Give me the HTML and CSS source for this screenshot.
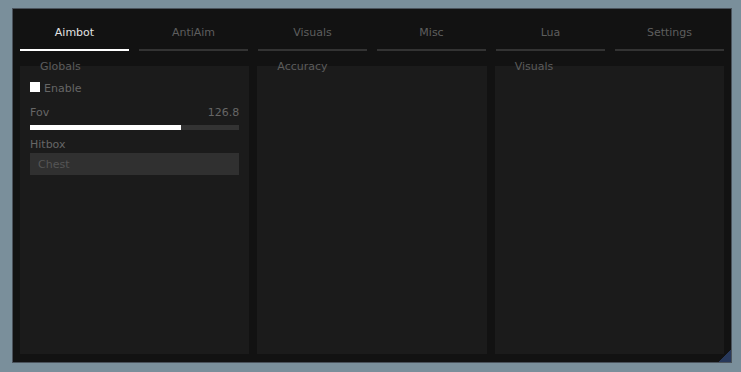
FILE: index.html
```html
<!DOCTYPE html>
<html lang="en">
<head>
    <meta charset="UTF-8">
    <meta name="viewport" content="width=device-width, initial-scale=1.0">
    <title>Menu</title>
    <link rel="stylesheet" href="styles.css">
</head>
<body>
    <div class="window">
        <!-- Tabs -->
        <div class="tabs">
            <div class="tab active">Aimbot</div>
            <div class="tab">AntiAim</div>
            <div class="tab">Visuals</div>
            <div class="tab">Misc</div>
            <div class="tab">Lua</div>
            <div class="tab">Settings</div>
        </div>

        <!-- Groups -->
        <div class="groups">
            <div class="group">
                <div class="group-title">Globals</div>
                <div class="checkbox-row">
                    <span class="checkbox checked"></span>
                    <span class="label">Enable</span>
                </div>
                <div class="slider-head">
                    <span class="label">Fov</span>
                    <span class="label">126.8</span>
                </div>
                <div class="slider">
                    <div class="slider-fill" style="width: 72.2%;"></div>
                </div>
                <div class="label combo-label">Hitbox</div>
                <div class="combo">Chest</div>
            </div>
            <div class="group">
                <div class="group-title">Accuracy</div>
            </div>
            <div class="group">
                <div class="group-title">Visuals</div>
            </div>
        </div>

        <div class="resize-grip"></div>
    </div>
</body>
</html>
```

FILE: styles.css
```css
body {
    margin: 0;
    padding: 8px 9px 9px 12px;
    background-color: #7a8f9b;
    font-family: "DejaVu Sans", Verdana, sans-serif;
    font-size: 11px;
    line-height: 14px;
}
.window {
    position: relative;
    box-sizing: border-box;
    width: 720px;
    height: 355px;
    background-color: #121212;
    border: 1px solid #4a525b;
    padding: 0 7px 8px 7px;
    display: flex;
    flex-direction: column;
}
.tabs {
    display: flex;
    gap: 10px;
    padding-top: 17px;
}
.tab {
    flex: 1;
    text-align: center;
    color: #5e5e5e;
    padding-bottom: 9px;
    border-bottom: 2px solid #333333;
}
.tab.active {
    color: #e2e2e2;
    border-bottom-color: #ffffff;
}
.groups {
    flex: 1;
    display: grid;
    grid-template-columns: 1fr 1fr 1fr;
    gap: 8px;
    margin-top: 15px;
}
.group {
    background-color: #1b1b1b;
    padding: 0 10px;
    display: flex;
    flex-direction: column;
}
.group-title {
    margin-top: -6px;
    padding-left: 10px;
    color: #5c5c5c;
}
.label {
    color: #666666;
}
.checkbox-row {
    display: flex;
    align-items: center;
    margin-top: 8px;
}
.checkbox {
    width: 10px;
    height: 10px;
    margin-right: 4px;
    margin-top: -4px;
    background-color: #333333;
}
.checkbox.checked {
    background-color: #ffffff;
}
.slider-head {
    display: flex;
    justify-content: space-between;
    margin-top: 10px;
}
.slider {
    height: 5px;
    margin-top: 5px;
    background-color: #333333;
}
.slider-fill {
    height: 100%;
    background-color: #ffffff;
}
.combo-label {
    margin-top: 8px;
}
.combo {
    margin-top: 1px;
    height: 21px;
    padding-top: 1px;
    line-height: 22px;
    padding-left: 8px;
    background-color: #303030;
    color: #555555;
}
.resize-grip {
    position: absolute;
    right: 0;
    bottom: 0;
    width: 12px;
    height: 12px;
    background: linear-gradient(to bottom right, transparent 50%, #27385a 50%);
}
```
